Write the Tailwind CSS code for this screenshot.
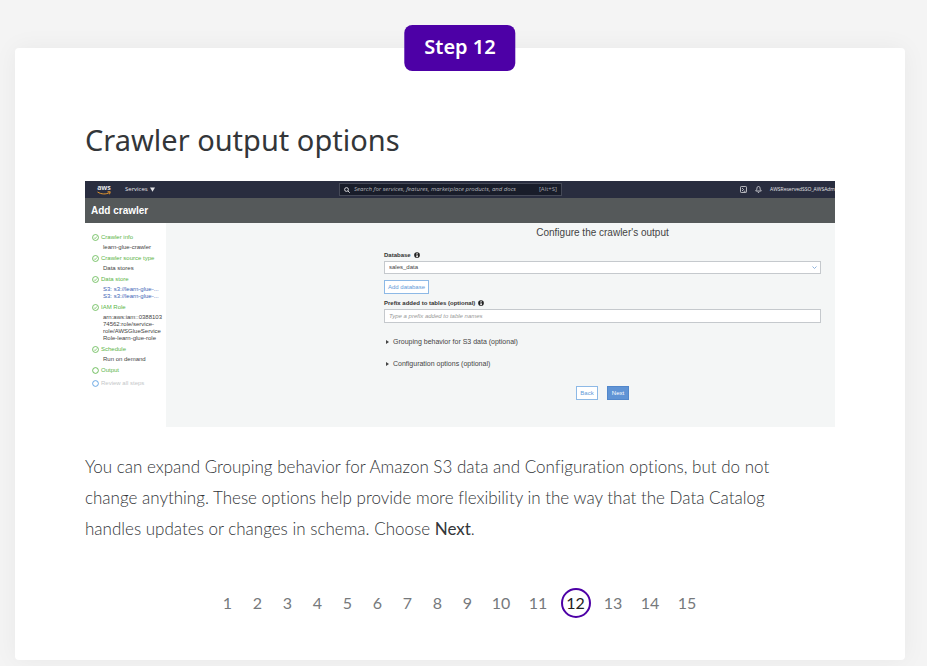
<!DOCTYPE html>
<html lang="en">
<head>
<meta charset="utf-8">
<meta name="viewport" content="width=device-width, initial-scale=1">
<title>Step 12 – Crawler output options</title>
<script src="https://cdn.jsdelivr.net/npm/@tailwindcss/browser@4"></script>
</head>
<body class="min-h-screen bg-[#f4f4f4] pt-12 pb-1.5 pl-[15px] pr-[22px] font-['Noto_Sans','Open_Sans',sans-serif] text-[#333639]">
<svg class="hidden" aria-hidden="true">
  <symbol id="done" viewBox="0 0 16 16"><circle cx="8" cy="8" r="6.8" fill="none" stroke="currentColor" stroke-width="1.8"/><path d="M4.8 8.2l2.3 2.4 4.2-4.9" fill="none" stroke="currentColor" stroke-width="1.6"/></symbol>
  <symbol id="todo" viewBox="0 0 16 16"><circle cx="8" cy="8" r="6.6" fill="none" stroke="currentColor" stroke-width="2"/></symbol>
  <symbol id="info" viewBox="0 0 16 16"><circle cx="8" cy="8" r="7.6" fill="#222"/><path d="M6.8 2.8h2.8v2.4H6.8zM5.8 6.6h3.8v4.8h1v1.6H5.8v-1.6h1V8.2h-1z" fill="#fff"/></symbol>
</svg>
<main class="relative rounded bg-white px-[70px] pt-[70px] pb-[42px] shadow-[0_0_24px_rgba(0,0,0,0.05)]">
  <div class="absolute -top-[23px] left-1/2 flex h-[46px] -translate-x-1/2 items-center whitespace-nowrap rounded-lg bg-[#4d00a6] px-5 pb-0.5 text-[20px] font-semibold text-white">Step 12</div>
  <h1 class="text-[29px] leading-[44px]">Crawler output options</h1>

  <section aria-label="AWS Glue console" class="mt-[19px] overflow-hidden bg-[#f4f6f6] font-['Liberation_Sans',Arial,sans-serif] text-[6px] leading-[7px] text-[#444]">
    <header class="flex h-[17px] items-center bg-[#292d3f] font-['Open_Sans',sans-serif] text-[#e5e5e8]">
      <div class="flex min-w-0 flex-[242] items-center gap-3.5 pl-3">
        <a href="#" class="flex flex-col items-center font-bold text-[7px] leading-[6px]">aws
          <svg class="h-[4px] w-[14px]" viewBox="0 0 28 8" fill="none" stroke="#e3952d" stroke-width="2"><path d="M1 2c8 5 17 5 24 1M21 1.500l5.500 0-1.500 5"/></svg>
        </a>
        <button class="flex items-center gap-0.5 font-medium">Services <svg class="size-[5px]" viewBox="0 0 10 10" fill="currentColor"><path d="M0 1h10L5 9.500z"/></svg></button>
      </div>
      <div class="flex h-[13px] w-[223px] items-center gap-1 border border-[#454957] bg-[#191d2a] px-1">
        <svg class="size-[6px] shrink-0" viewBox="0 0 12 12" fill="none" stroke="currentColor" stroke-width="1.8"><circle cx="5" cy="5" r="3.800"/><path d="M8 8l3.500 3.500"/></svg>
        <input type="search" aria-label="Search" placeholder="Search for services, features, marketplace products, and docs" class="min-w-0 flex-1 italic placeholder:text-[#b5b6bc]">
        <span class="text-[#a4a6ad]">[Alt+S]</span>
      </div>
      <div class="flex min-w-0 flex-[273] items-center justify-end gap-2 whitespace-nowrap">
        <svg class="size-[7px] shrink-0" viewBox="0 0 14 14" fill="none" stroke="currentColor" stroke-width="1.500"><rect x="1" y="1" width="12" height="12" rx="1.500"/><path d="M4 4l3 3-3 3M7.500 10.500H11"/></svg>
        <svg class="size-[7px] shrink-0" viewBox="0 0 14 14" fill="none" stroke="currentColor" stroke-width="1.600"><path d="M7 1C4.500 1 3.800 3 3.800 5.500 3.800 8 1.500 8.500 1.500 10h11C12.500 8.500 10.200 8 10.200 5.500 10.200 3 9.500 1 7 1zM5.500 11.500c.3 2 2.700 2 3 0"/></svg>
        <span class="text-[5px]">AWSReservedSSO_AWSAdm</span>
      </div>
    </header>
    <h2 class="flex h-[25px] items-center bg-[#55595a] px-1.5 text-[10px] font-bold text-white">Add crawler</h2>

    <div class="flex">
      <nav aria-label="Crawler steps" class="w-[81px] shrink-0 bg-white pt-[11px] pb-10 pl-[7px]">
        <ol class="flex flex-col gap-1 text-[#5bb548]">
          <li><span class="flex items-center gap-0.5"><svg class="size-[7px]"><use href="#done"/></svg>Crawler info</span><p class="mt-[3px] pl-[11px] text-[#444]">learn-glue-crawler</p></li>
          <li><span class="flex items-center gap-0.5"><svg class="size-[7px]"><use href="#done"/></svg>Crawler source type</span><p class="mt-[3px] pl-[11px] text-[#444]">Data stores</p></li>
          <li><span class="flex items-center gap-0.5"><svg class="size-[7px]"><use href="#done"/></svg>Data store</span><p class="mt-[3px] pl-[11px] text-[#3a63b5]"><a href="#" class="block">S3: s3://learn-glue-...</a><a href="#" class="block">S3: s3://learn-glue-...</a></p></li>
          <li><span class="flex items-center gap-0.5"><svg class="size-[7px]"><use href="#done"/></svg>IAM Role</span><p class="mt-[3px] whitespace-nowrap pl-[11px] text-[#444]">arn:aws:iam::0388103<br>74562:role/service-<br>role/AWSGlueService<br>Role-learn-glue-role</p></li>
          <li><span class="flex items-center gap-0.5"><svg class="size-[7px]"><use href="#done"/></svg>Schedule</span><p class="mt-[3px] pl-[11px] text-[#444]">Run on demand</p></li>
          <li class="flex items-center gap-0.5"><svg class="size-[7px]"><use href="#todo"/></svg>Output</li>
          <li class="mt-0.5 flex items-center gap-0.5 text-[#c4c7c9]"><svg class="size-[7px] text-[#559be0]"><use href="#todo"/></svg>Review all steps</li>
        </ol>
      </nav>

      <form class="flex min-w-0 flex-1 flex-col pr-[14px] pl-[218px] pt-1" onsubmit="return false">
        <h3 class="text-center text-[10px] leading-3">Configure the crawler's output</h3>
        <label for="db" class="mt-3 flex items-center gap-[3px] font-bold leading-2 text-[#333]">Database <svg class="size-[6px]"><use href="#info"/></svg></label>
        <div class="relative mt-0.5">
          <select id="db" class="h-[13px] w-full appearance-none border border-[#c5c9cd] bg-white px-1 text-[#444]"><option>sales_data</option></select>
          <svg class="pointer-events-none absolute right-1 top-1 size-[5px]" viewBox="0 0 10 10" fill="none" stroke="#8fb3dd" stroke-width="2"><path d="M1 3l4 4 4-4"/></svg>
        </div>
        <button class="mt-1.5 h-3.5 w-[45px] border border-[#8db9e6] bg-white text-[#5f9ad8]">Add database</button>
        <label for="prefix" class="mt-[5px] flex items-center gap-[3px] font-bold leading-2 text-[#333]">Prefix added to tables (optional) <svg class="size-[6px]"><use href="#info"/></svg></label>
        <input id="prefix" type="text" placeholder="Type a prefix added to table names" class="mt-0.5 h-3.5 border border-[#c5c9cd] bg-white px-1 italic placeholder:text-[#999]">
        <button class="mt-3.5 flex items-center gap-1 pl-0.5 text-[7px] leading-[10px]"><svg class="h-1 w-[3px]" viewBox="0 0 6 8" fill="currentColor"><path d="M0 0l6 4-6 4z"/></svg>Grouping behavior for S3 data (optional)</button>
        <button class="mt-3 flex items-center gap-1 pl-0.5 text-[7px] leading-[10px]"><svg class="h-1 w-[3px]" viewBox="0 0 6 8" fill="currentColor"><path d="M0 0l6 4-6 4z"/></svg>Configuration options (optional)</button>
        <div class="mt-[17px] flex justify-center gap-[9px]">
          <button class="h-3.5 w-[22px] border border-[#8db9e6] bg-white text-[#5f9ad8]">Back</button>
          <button class="h-3.5 w-[22px] border border-[#5287cb] bg-[#6094d5] text-white">Next</button>
        </div>
      </form>
    </div>
  </section>

  <p class="mt-6 pr-8 font-[Lato,sans-serif] text-[17px] font-light leading-[31px] [font-variant-ligatures:none]">You can expand Grouping behavior for Amazon S3 data and Configuration options, but do not change anything. These options help provide more flexibility in the way that the Data Catalog handles updates or changes in schema. Choose <b class="font-normal">Next</b>.</p>

  <nav aria-label="Steps" class="mt-11 flex items-center justify-center pr-0.5 font-[Lato,sans-serif] text-[16px] leading-[30px] text-[#76797c]">
    <a href="#" class="w-[30px] text-center">1</a>
    <a href="#" class="w-[30px] text-center">2</a>
    <a href="#" class="w-[30px] text-center">3</a>
    <a href="#" class="w-[30px] text-center">4</a>
    <a href="#" class="w-[30px] text-center">5</a>
    <a href="#" class="w-[30px] text-center">6</a>
    <a href="#" class="w-[30px] text-center">7</a>
    <a href="#" class="w-[30px] text-center">8</a>
    <a href="#" class="w-[30px] text-center">9</a>
    <a href="#" class="w-[37px] text-center">10</a>
    <a href="#" class="w-[37px] text-center">11</a>
    <a href="#" aria-current="step" class="mx-1 flex size-[30px] items-center justify-center rounded-full border-2 border-[#4d00a6] text-[#222]">12</a>
    <a href="#" class="w-[37px] text-center">13</a>
    <a href="#" class="w-[37px] text-center">14</a>
    <a href="#" class="w-[37px] text-center">15</a>
  </nav>
</main>
</body>
</html>
